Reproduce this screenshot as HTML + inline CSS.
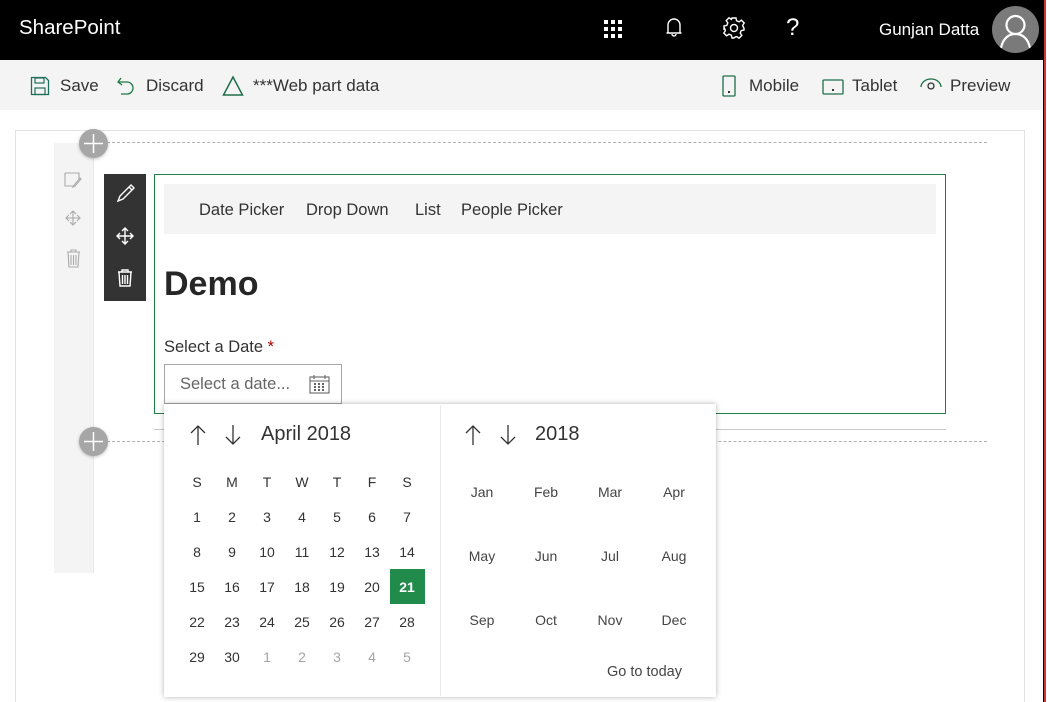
<!DOCTYPE html>
<html><head><meta charset="utf-8"><style>
*{margin:0;padding:0;box-sizing:border-box}
html,body{width:1047px;height:702px;overflow:hidden}
body{background:#fff;font-family:"Liberation Sans",sans-serif;color:#333;position:relative}
.a{position:absolute}
.t{position:absolute;white-space:nowrap;line-height:20px}
.c{position:absolute;width:34px;text-align:center;font-size:14px;line-height:20px;color:#333}
.m{position:absolute;width:60px;text-align:center;font-size:14px;line-height:20px;color:#444}
.g{color:#a6a6a6}
</style></head><body>
<div class="a" style="left:0;top:0;width:1043px;height:60px;background:#000"></div>
<div class="a" style="left:1043px;top:0;width:1px;height:702px;background:#000"></div>
<div class="a" style="left:1044px;top:0;width:2px;height:702px;background:#d13438"></div>
<div class="t" style="left:19px;top:17px;font-size:20.5px;color:#fff;line-height:22px">SharePoint</div>
<svg class="a" style="left:603px;top:19px" width="20" height="20"><g fill="#fff"><rect x="1" y="1" width="4" height="4"/><rect x="8" y="1" width="4" height="4"/><rect x="15" y="1" width="4" height="4"/><rect x="1" y="8" width="4" height="4"/><rect x="8" y="8" width="4" height="4"/><rect x="15" y="8" width="4" height="4"/><rect x="1" y="15" width="4" height="4"/><rect x="8" y="15" width="4" height="4"/><rect x="15" y="15" width="4" height="4"/></g></svg>
<svg class="a" style="left:664px;top:17px" width="20" height="22"><path d="M4 16V8a6 6 0 0 1 12 0v8h1.5H2.5zM8 17a2 2 0 0 0 4 0" fill="none" stroke="#fff" stroke-width="1.4"/></svg>
<svg class="a" style="left:722px;top:16px" width="24" height="24" viewBox="0 0 24 24"><path d="M10 2h4l.6 2.8 2.4 1 2.4-1.6 2.8 2.8-1.6 2.4 1 2.4L22 12v0l0 2-2.8.6-1 2.4 1.6 2.4-2.8 2.8-2.4-1.6-2.4 1L12 22h-2l-.6-2.8-2.4-1-2.4 1.6-2.8-2.8 1.6-2.4-1-2.4L2 14v-4l2.8-.6 1-2.4L4.2 4.6 7 1.8l2.4 1.6z" fill="none" stroke="#fff" stroke-width="1.4"/><circle cx="12" cy="12" r="3.5" fill="none" stroke="#fff" stroke-width="1.4"/></svg>
<div class="t" style="left:786px;top:15px;font-size:24px;color:#fff;line-height:26px">?</div>
<div class="t" style="left:879px;top:20px;font-size:17px;color:#fff">Gunjan Datta</div>
<div class="a" style="left:992px;top:6px;width:47px;height:47px;border-radius:50%;background:#7a7a7a;overflow:hidden">
<svg width="47" height="47"><circle cx="23.5" cy="19" r="9" fill="none" stroke="#fff" stroke-width="2.2"/><path d="M9 42c2-10 8-14 14.5-14S36 32 38 42" fill="none" stroke="#fff" stroke-width="2.2"/></svg></div>
<div class="a" style="left:0;top:60px;width:1043px;height:50px;background:#f4f4f4"></div>
<svg class="a" style="left:30px;top:76px" width="20" height="20"><path d="M1.5 1.5h14l3 3v14h-17z" fill="none" stroke="#1f6e5a" stroke-width="1.3"/><rect x="5" y="2" width="9" height="5" fill="none" stroke="#1f6e5a" stroke-width="1.2"/><rect x="5" y="12" width="10" height="6.5" fill="none" stroke="#1f6e5a" stroke-width="1.2"/></svg>
<div class="t" style="left:60px;top:76px;font-size:17px">Save</div>
<svg class="a" style="left:116px;top:76px" width="20" height="22"><path d="M5 2L2 6l4 3M2 6h9a6 6 0 0 1 0 12H5" fill="none" stroke="#1f7a45" stroke-width="1.3"/></svg>
<div class="t" style="left:146px;top:76px;font-size:17px">Discard</div>
<svg class="a" style="left:222px;top:75px" width="22" height="22"><path d="M11 2L1.5 20h19z" fill="none" stroke="#1f6e4a" stroke-width="1.5"/></svg>
<div class="t" style="left:253px;top:76px;font-size:17px">***Web part data</div>
<svg class="a" style="left:722px;top:75px" width="14" height="22"><rect x="1" y="1" width="12" height="20" rx="1" fill="none" stroke="#1f6e4a" stroke-width="1.3"/><rect x="6" y="16" width="2" height="2" fill="#333"/></svg>
<div class="t" style="left:749px;top:76px;font-size:17px">Mobile</div>
<svg class="a" style="left:822px;top:79px" width="22" height="16"><rect x="1" y="1" width="20" height="14" rx="1" fill="none" stroke="#1f6e4a" stroke-width="1.3"/><rect x="10" y="10" width="2" height="2" fill="#333"/></svg>
<div class="t" style="left:852px;top:76px;font-size:17px">Tablet</div>
<svg class="a" style="left:919px;top:77px" width="24" height="16"><path d="M2 10a10 8 0 0 1 20 0" fill="none" stroke="#1f6e4a" stroke-width="1.3"/><circle cx="12" cy="9" r="3" fill="none" stroke="#333" stroke-width="1.3"/></svg>
<div class="t" style="left:950px;top:76px;font-size:17px">Preview</div>
<div class="a" style="left:15px;top:130px;width:1010px;height:572px;border:1px solid #e1e1e1;border-bottom:none"></div>
<div class="a" style="left:54px;top:143px;width:40px;height:430px;background:#f4f4f4;border-right:1px solid #e8e8e8"></div>
<svg class="a" style="left:62px;top:170px" width="22" height="100"><g fill="none" stroke="#aaa" stroke-width="1.1"><path d="M3 3h14v7M3 3v13h8"/><path d="M19 9l-6 7-2 1 1-2 6-7z"/><path d="M4 48h14M11 41v14M8 44l3-3 3 3M8 52l3 3 3-3M7 45l-3 3 3 3M15 45l3 3-3 3"/><path d="M5 82h13M9 82v-2h5v2M6 82l1 15h9l1-15M9 85v10M11.5 85v10M14 85v10"/></g></svg>
<div class="a" style="left:107px;top:142px;width:880px;border-top:1px dashed #b0b0b0"></div>
<div class="a" style="left:107px;top:441px;width:880px;border-top:1px dashed #b0b0b0"></div>
<div class="a" style="left:79px;top:129px;width:29px;height:29px;border-radius:50%;background:#a6a6a6;box-shadow:0 1px 3px rgba(0,0,0,.25)"><svg width="29" height="29"><path d="M14.5 5v19M5 14.5h19" stroke="#fff" stroke-width="1.5"/></svg></div>
<div class="a" style="left:79px;top:427px;width:29px;height:29px;border-radius:50%;background:#a6a6a6;box-shadow:0 1px 3px rgba(0,0,0,.25)"><svg width="29" height="29"><path d="M14.5 5v19M5 14.5h19" stroke="#fff" stroke-width="1.5"/></svg></div>
<div class="a" style="left:104px;top:174px;width:42px;height:127px;background:#333"></div>
<svg class="a" style="left:104px;top:174px" width="42" height="127"><g fill="none" stroke="#fff" stroke-width="1.4"><path d="M14 27l2-5 11-11 3 3-11 11z"/><path d="M25 13l3 3"/><path d="M13 62h16M21 54v16M18 57l3-3 3 3M18 67l3 3 3-3M16 59l-3 3 3 3M26 59l3 3-3 3"/><path d="M14 98h14M18 98v-2h6v2M15 98l1 14h10l1-14M18.5 101v9M21 101v9M23.5 101v9"/></g></svg>
<div class="a" style="left:154px;top:174px;width:792px;height:240px;border:1px solid #1e7e45"></div>
<div class="a" style="left:164px;top:184px;width:772px;height:50px;background:#f4f4f4"></div>
<div class="t" style="left:199px;top:200px;font-size:16.5px">Date Picker</div>
<div class="t" style="left:306px;top:200px;font-size:16.5px">Drop Down</div>
<div class="t" style="left:415px;top:200px;font-size:16.5px">List</div>
<div class="t" style="left:461px;top:200px;font-size:16.5px">People Picker</div>
<div class="t" style="left:164px;top:264px;font-size:34px;font-weight:bold;line-height:40px;color:#262626">Demo</div>
<div class="t" style="left:164px;top:337px;font-size:16.5px">Select a Date <span style="color:#a80000">*</span></div>
<div class="a" style="left:164px;top:364px;width:178px;height:40px;border:1px solid #a6a6a6;background:#fff"></div>
<div class="t" style="left:180px;top:374px;font-size:16.5px;color:#666">Select a date...</div>
<svg class="a" style="left:309px;top:374px" width="21" height="20"><g fill="none" stroke="#666" stroke-width="1.1"><rect x="1" y="3" width="19" height="16"/><path d="M1 7h19M5 1v4M16 1v4"/></g><g fill="#666"><rect x="5" y="9" width="2" height="2"/><rect x="9" y="9" width="2" height="2"/><rect x="13" y="9" width="2" height="2"/><rect x="5" y="12" width="2" height="2"/><rect x="9" y="12" width="2" height="2"/><rect x="13" y="12" width="2" height="2"/><rect x="5" y="15" width="2" height="2"/><rect x="9" y="15" width="2" height="2"/><rect x="13" y="15" width="2" height="2"/></g></svg>
<div class="a" style="left:154px;top:429px;width:792px;border-top:1px solid #c8c8c8"></div>
<div class="a" style="left:164px;top:404px;width:552px;height:293px;background:#fff;box-shadow:0 0 5px rgba(0,0,0,.3)"></div>
<div class="a" style="left:440px;top:405px;width:1px;height:291px;background:#eaeaea"></div>
<svg class="a" style="left:188px;top:424px" width="56" height="22"><g fill="none" stroke="#333" stroke-width="1.3"><path d="M10 21V2M3 9l7-7 7 7"/><path d="M45 1v19M38 13l7 7 7-7"/></g></svg>
<div class="t" style="left:261px;top:422px;font-size:20px;line-height:24px;color:#333">April 2018</div>
<svg class="a" style="left:463px;top:424px" width="56" height="22"><g fill="none" stroke="#333" stroke-width="1.3"><path d="M10 21V2M3 9l7-7 7 7"/><path d="M45 1v19M38 13l7 7 7-7"/></g></svg>
<div class="t" style="left:535px;top:422px;font-size:20px;line-height:24px;color:#333">2018</div>
<div class="a" style="left:390px;top:569px;width:35px;height:35px;background:#218b4b"></div>
<div id="cal"></div>
<div class="t" style="left:607px;top:662px;font-size:14.5px;color:#444">Go to today</div>
<script>
var h='';var xs=[197,232,267,302,337,372,407];
var hd=['S','M','T','W','T','F','S'];
for(var i=0;i<7;i++)h+='<div class="c" style="left:'+(xs[i]-17)+'px;top:472px">'+hd[i]+'</div>';
var d=1;var ys=[517,552,587,622,657];
for(var r=0;r<5;r++)for(var i=0;i<7;i++){var n=d,cls='c',st='';if(d>30){n=d-30;cls='c g';}
if(d==21)st='color:#fff;font-weight:bold;';
h+='<div class="'+cls+'" style="left:'+(xs[i]-17)+'px;top:'+(ys[r]-10)+'px;'+st+'">'+n+'</div>';d++;}
var mn=['Jan','Feb','Mar','Apr','May','Jun','Jul','Aug','Sep','Oct','Nov','Dec'];var mx=[482,546,610,674],my=[492,556,620];
for(var k=0;k<12;k++)h+='<div class="m" style="left:'+(mx[k%4]-30)+'px;top:'+(my[Math.floor(k/4)]-10)+'px">'+mn[k]+'</div>';
document.getElementById('cal').innerHTML=h;
</script>
</body></html>
